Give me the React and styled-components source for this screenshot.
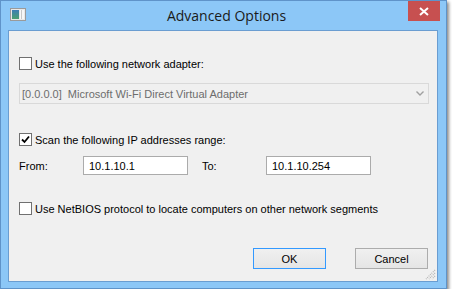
import React from 'react';
import styled, { createGlobalStyle } from 'styled-components';

const GlobalStyle = createGlobalStyle`
    body {
        margin: 0;
        background: #ffffff;
        font-family: "Liberation Sans", Arial, sans-serif;
    }
`;

const Window = styled.div`
    width: 447px;
    height: 289px;
    box-sizing: border-box;
    border: 1px solid #5f93c9;
    background: #8cc7f7;
    box-shadow: 2px 2px 3px rgba(0,0,0,.45);
    display: flex;
    flex-direction: column;
`;

const TitleBar = styled.div`
    height: 29px;
    display: grid;
    grid-template-columns: 1fr auto 1fr;
    align-items: start;
    padding: 0 6px 0 9px;
`;

const AppIcon = styled.svg`
    margin-top: 7px;
`;

const Title = styled.div`
    font-family: "Open Sans", "Noto Sans", sans-serif;
    font-size: 14px;
    color: #1a1a1a;
    margin-top: 5px;
    margin-left: 3px;
`;

const CloseButton = styled.div`
    justify-self: end;
    width: 32px;
    height: 20px;
    background: #c75050;
    display: flex;
    align-items: center;
    justify-content: center;
`;

const Frame = styled.div`
    flex: 1;
    padding: 0 8px 6px 7px;
    display: flex;
`;

const Client = styled.div`
    flex: 1;
    position: relative;
    border: 1px solid #6a9dd1;
    background: #f0f0f0;
    padding: 26px 8px 0 10px;
    display: flex;
    flex-direction: column;
    font-size: 11px;
    color: #000;
`;

const CheckRow = styled.label`
    display: flex;
    align-items: center;
    gap: 3px;
    height: 13px;
    margin-top: ${p => p.$top}px;
`;

const Box = styled.span`
    width: 13px;
    height: 13px;
    box-sizing: border-box;
    border: 1px solid #707070;
    background: #fff;
    display: flex;
    align-items: center;
    justify-content: center;
`;

const Checkbox = ({checked}) => (
    <Box>
        {checked && <svg width="9" height="9" viewBox="0 0 9 9"><path d="M1 4.5 L3.5 7 L8 1.5" fill="none" stroke="#000" strokeWidth="1.8"/></svg>}
    </Box>
);

const Select = styled.div`
    margin-top: 13px;
    height: 21px;
    box-sizing: border-box;
    border: 1px solid #d9d9d9;
    background: #f0f0f0;
    display: flex;
    align-items: center;
    justify-content: space-between;
    padding: 0 4px 0 2px;
    color: #6d6d6d;
    white-space: pre;
`;

const RangeRow = styled.div`
    display: flex;
    align-items: center;
    margin-top: 10px;
    height: 19px;
`;

const Label = styled.span`
    width: ${p => p.$w}px;
`;

const TextField = styled.input`
    width: 105px;
    height: 19px;
    box-sizing: border-box;
    border: 1px solid #ababab;
    background: #fff;
    padding: 0 5px;
    margin: 0;
    font: inherit;
    font-size: 11px;
    color: #000;
    outline: none;
`;

const Buttons = styled.div`
    margin-top: 33px;
    display: flex;
    justify-content: flex-end;
    gap: 29px;
    padding-right: 1px;
`;

const Button = styled.div`
    width: 73px;
    height: 21px;
    box-sizing: border-box;
    border: 1px solid ${p => p.$focused ? '#3399ff' : '#acacac'};
    background: linear-gradient(#f0f0f0, #e5e5e5);
    display: flex;
    align-items: center;
    justify-content: center;
`;

const Grip = styled.svg`
    position: absolute;
    right: 1px;
    bottom: 1px;
`;

const App = () => (
    <>
        <GlobalStyle />
        <Window>
            <TitleBar>
                <AppIcon width="16" height="13" viewBox="0 0 16 13">
                    <rect x="0.5" y="0.5" width="15" height="12" fill="#e8e8e8" stroke="#9a9a9a"/>
                    <defs>
                        <linearGradient id="g" x1="0" y1="0" x2="0" y2="1">
                            <stop offset="0" stopColor="#3d7fb5"/>
                            <stop offset="1" stopColor="#4aa070"/>
                        </linearGradient>
                    </defs>
                    <rect x="2" y="2" width="7" height="9" fill="url(#g)"/>
                    <rect x="10" y="2" width="4" height="9" fill="#f7f7f7"/>
                    <line x1="11.5" y1="2" x2="11.5" y2="11" stroke="#c8c8c8"/>
                </AppIcon>
                <Title>Advanced Options</Title>
                <CloseButton>
                    <svg width="10" height="9" viewBox="0 0 10 9"><path d="M1 1 L9 8 M9 1 L1 8" stroke="#fff" strokeWidth="2"/></svg>
                </CloseButton>
            </TitleBar>
            <Frame>
                <Client>
                    <CheckRow $top={0}><Checkbox /><span>Use the following network adapter:</span></CheckRow>
                    <Select>
                        <span>[0.0.0.0]  Microsoft Wi-Fi Direct Virtual Adapter</span>
                        <svg width="8" height="5" viewBox="0 0 8 5"><path d="M0.5 0.5 L4 4 L7.5 0.5" fill="none" stroke="#a0a0a0" strokeWidth="1.4"/></svg>
                    </Select>
                    <CheckRow $top={29}><Checkbox checked /><span>Scan the following IP addresses range:</span></CheckRow>
                    <RangeRow>
                        <Label $w={64}>From:</Label>
                        <TextField readOnly defaultValue="10.1.10.1" />
                        <Label $w={78} style={{paddingLeft: 14, boxSizing: 'border-box'}}>To:</Label>
                        <TextField readOnly defaultValue="10.1.10.254" />
                    </RangeRow>
                    <CheckRow $top={27}><Checkbox /><span>Use NetBIOS protocol to locate computers on other network segments</span></CheckRow>
                    <Buttons>
                        <Button $focused>OK</Button>
                        <Button>Cancel</Button>
                    </Buttons>
                    <Grip width="11" height="11" viewBox="0 0 11 11">
                        <path d="M10 1 L1 10 M10 4 L4 10 M10 7 L7 10" stroke="#b5b5b5" strokeWidth="1.2" strokeDasharray="1 1"/>
                    </Grip>
                </Client>
            </Frame>
        </Window>
    </>
);

export default App;
